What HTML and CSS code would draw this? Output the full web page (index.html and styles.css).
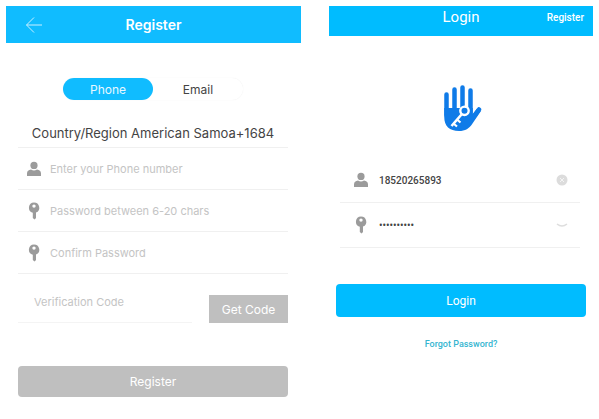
FILE: index.html
```html
<!DOCTYPE html>
<html lang="en">
<head>
    <meta charset="UTF-8">
    <meta name="viewport" content="width=device-width, initial-scale=1.0">
    <title>Register / Login</title>
    <link rel="stylesheet" href="styles.css">
</head>
<body>

    <!-- shared icons -->
    <svg class="sprite" aria-hidden="true">
        <symbol id="user" viewBox="0 0 16 16">
            <circle cx="8" cy="4.400" r="3.600"/>
            <path d="M1 15v-2.400C1 10 2.600 9 5 8.600Q8 10.400 11 8.600C13.400 9 15 10 15 12.600V15z"/>
        </symbol>
        <symbol id="key" viewBox="0 0 12 18">
            <path fill-rule="evenodd" d="M6 .4a5.300 5.300 0 0 1 2 10.200V16L6.600 17.600 4.800 16V10.800A5.300 5.300 0 0 1 6 .4zM6 2.400a1.700 1.700 0 1 0 0 3.400 1.700 1.700 0 0 0 0-3.400z"/>
        </symbol>
    </svg>

    <section class="screen register">
        <header class="bar">
            <button class="back" type="button" aria-label="Back">
                <svg viewBox="0 0 18 18"><path d="M17 9H1.500M9 1.500L1.500 9 9 16.500"/></svg>
            </button>
            <h1>Register</h1>
        </header>

        <form class="register-form">
            <div class="tabs">
                <button class="tab active" type="button">Phone</button>
                <button class="tab" type="button">Email</button>
            </div>

            <button class="country" type="button">Country/Region American Samoa+1684</button>

            <div class="field">
                <label for="phone" aria-label="Phone number"><svg class="icon"><use href="#user"/></svg></label>
                <input id="phone" type="tel" placeholder="Enter your Phone number">
            </div>
            <div class="field">
                <label for="password" aria-label="Password"><svg class="icon"><use href="#key"/></svg></label>
                <input id="password" type="password" placeholder="Password between 6-20 chars">
            </div>
            <div class="field">
                <label for="confirm" aria-label="Confirm password"><svg class="icon"><use href="#key"/></svg></label>
                <input id="confirm" type="password" placeholder="Confirm Password">
            </div>

            <div class="verify">
                <input type="text" aria-label="Verification code" placeholder="Verification Code">
                <button type="button">Get Code</button>
            </div>

            <button class="submit" type="submit">Register</button>
        </form>
    </section>

    <section class="screen login">
        <header class="bar">
            <h1>Login</h1>
            <a class="to-register" href="#">Register</a>
        </header>

        <svg class="logo" viewBox="0 0 42 46" role="img" aria-label="Hand with key">
            <g stroke="#0f7be8" stroke-width="4.500" stroke-linecap="round" fill="none">
                <path d="M6.500 9.500V30M14.500 4.500V28M22.500 2.500V28M30.500 5.500V28M39 24.500L32 34"/>
            </g>
            <path fill="#0f7be8" d="M4.250 23H32.750V29L37 23.500 41 26 32.500 38.500C29.500 43.500 25 46 19 46 9.500 46 4.250 41 4.250 32z"/>
            <g stroke="#fff" fill="none">
                <circle cx="24.500" cy="25.800" r="4.200" stroke-width="2.400"/>
                <path stroke-width="2.600" d="M21.500 29.500L11.500 41"/>
                <path stroke-width="2.200" d="M17 34.500L20.500 37.500M13.500 38.500L17 41.500"/>
            </g>
        </svg>

        <form class="login-form">
            <div class="field">
                <label for="account" aria-label="Account"><svg class="icon"><use href="#user"/></svg></label>
                <input id="account" type="text" value="18520265893">
                <button class="clear" type="button" aria-label="Clear">
                    <svg viewBox="0 0 12 12"><circle cx="6" cy="6" r="5.500" fill="#dcdcdc"/><path d="M4 4l4 4M8 4L4 8" stroke="#f4f4f4"/></svg>
                </button>
            </div>
            <div class="field">
                <label for="login-password" aria-label="Password"><svg class="icon"><use href="#key"/></svg></label>
                <input id="login-password" type="password" value="abcdefghij">
                <button class="clear" type="button" aria-label="Show password">
                    <svg viewBox="0 0 12 12"><path d="M1 5Q6 9 11 5" fill="none" stroke="#dedede" stroke-width="1.500"/></svg>
                </button>
            </div>

            <button class="submit" type="submit">Login</button>
        </form>

        <a class="forgot" href="#">Forgot Password?</a>
    </section>

</body>
</html>
```

FILE: styles.css
```css
* {
    box-sizing: border-box;
}
body {
    margin: 0;
    padding: 6px;
    display: grid;
    grid-template-columns: minmax(0, 295fr) minmax(0, 264fr);
    align-items: start;
    gap: 28px;
    background: #fff;
    color: #444;
    font-family: Inter, "Liberation Sans", sans-serif;
}
button, input {
    margin: 0;
    padding: 0;
    border: none;
    background: none;
    color: inherit;
    font-family: inherit;
}
button {
    cursor: pointer;
}
input {
    flex: 1;
    min-width: 0;
    outline: none;
}
a {
    text-decoration: none;
}
.sprite {
    position: absolute;
    width: 0;
    height: 0;
}
.bar {
    display: grid;
    grid-template-columns: 1fr auto 1fr;
    align-items: center;
    background: #10bcff;
    color: #fff;
}
.bar h1 {
    grid-column: 2;
    margin: 0;
}
.field {
    display: flex;
    align-items: center;
    border-bottom: 1px solid #f0f0f0;
}
.field label {
    display: flex;
}
.icon {
    width: 16px;
    height: 18px;
    fill: #9b9b9b;
}
.submit {
    display: block;
    width: 100%;
    border-radius: 4px;
    color: #fff;
}

/* register */
.register .bar {
    height: 37px;
}
.register .bar h1 {
    font-size: 14px;
    font-weight: 600;
}
.back {
    margin-left: 19px;
    width: 18px;
    height: 18px;
}
.back svg {
    display: block;
    fill: none;
    stroke: #c9efff;
}
.register-form {
    padding: 35px 13px 0 12px;
}
.tabs {
    display: flex;
    width: 180px;
    margin: 0 auto;
    border-radius: 12px;
    box-shadow: 0 0 1px #e8e8e8;
}
.tab {
    flex: 1;
    height: 22px;
    border-radius: 11px;
    font-size: 12px;
}
.tab.active {
    background: #10bcff;
    color: #e8f8ff;
}
.country {
    display: block;
    width: 100%;
    height: 48px;
    padding: 18px 0 0;
    border-bottom: 1px solid #f0f0f0;
    font-size: 13px;
    white-space: nowrap;
}
.register .field {
    height: 42px;
    padding-left: 8px;
    gap: 8px;
}
.register input {
    font-size: 11px;
}
.register input::placeholder {
    color: #c4c4c4;
}
.verify {
    display: flex;
    align-items: flex-end;
    gap: 17px;
    margin-top: 21px;
}
.verify input {
    height: 28px;
    padding: 0 0 14px 16px;
    border-bottom: 1px solid #f4f4f4;
}
.verify button {
    width: 79px;
    height: 28px;
    background: #bfbfbf;
    color: #fff;
    font-size: 12px;
}
.register .submit {
    height: 31px;
    margin-top: 43px;
    background: #bfbfbf;
    font-size: 12px;
}

/* login */
.login {
    font-family: Roboto, "Liberation Sans", sans-serif;
}
.login .bar {
    height: 30px;
    padding: 0 9px 8px;
    background: #00bcff;
}
.login .bar h1 {
    font-size: 15px;
    font-weight: 400;
}
.to-register {
    justify-self: end;
    color: #fff;
    font-size: 10px;
    font-weight: 500;
}
.logo {
    display: block;
    width: 42px;
    height: 46px;
    margin: 49px auto 27px;
}
.login-form {
    padding: 0 7px;
}
.login .field {
    height: 45px;
    margin: 0 6px 0 4px;
    padding: 0 12px 0 13px;
    gap: 10px;
}
.login input {
    font-size: 10px;
    font-weight: 500;
}
.clear {
    width: 12px;
    height: 12px;
}
.clear svg {
    display: block;
}
.login .submit {
    height: 33px;
    margin-top: 36px;
    background: #00bcff;
    font-size: 12px;
}
.forgot {
    display: block;
    margin-top: 21px;
    color: #35b5d0;
    font-size: 9px;
    font-weight: 500;
    line-height: 12px;
    text-align: center;
}
```
